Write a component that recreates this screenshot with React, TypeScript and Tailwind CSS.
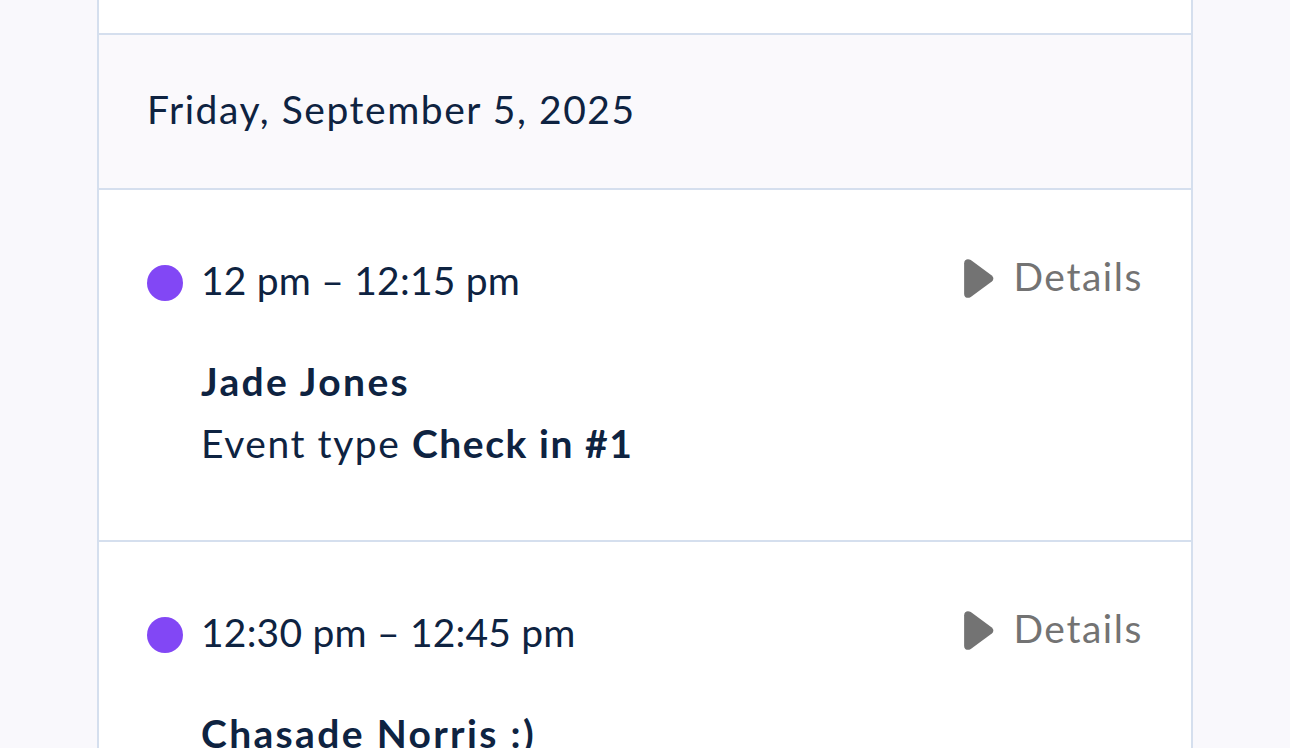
import React from "react";

interface EventItem {
  time: string;
  name: string;
  type: string;
}

const events: EventItem[] = [
  { time: "12 pm – 12:15 pm", name: "Jade Jones", type: "Check in #1" },
  { time: "12:30 pm – 12:45 pm", name: "Chasade Norris :)", type: "Check in #1" },
];

const Caret = () => (
  <svg viewBox="0 0 30 40" className="w-[31px] h-[41px]" fill="#737373">
    <path d="M1 5C1 1.5 4.5 0 7.5 2L28 17C30 18.5 30 21.5 28 23L7.5 38C4.5 40 1 38.5 1 35Z" />
  </svg>
);

const EventRow: React.FC<{ item: EventItem }> = ({ item }) => (
  <div className="border-t-2 border-[#d5dfee] bg-white px-[48px] pt-[62px] pb-[66px]">
    <div className="flex items-center justify-between h-[56px]">
      <div className="flex items-center">
        <span className="w-[36px] h-[36px] rounded-full bg-[#8247f5] mr-[18px] mt-[6px]" />
        <span className="tracking-[0.005em]">{item.time}</span>
      </div>
      <button className="flex items-center text-[#737373] -mt-[4px]">
        <Caret />
        <span className="ml-[19px] -mt-[4px]">Details</span>
      </button>
    </div>
    <div className="pl-[54px] mt-[42px] leading-[62px]">
      <div className="font-bold tracking-[0.06em]">{item.name}</div>
      <div>
        Event type <span className="font-bold tracking-[0.04em]">{item.type}</span>
      </div>
    </div>
  </div>
);

export default function App() {
  return (
    <div
      className="min-h-screen bg-[#f9f8fc] text-[#0e2341] text-[39px] leading-[56px] tracking-[0.04em]"
      style={{ fontFamily: "Lato, 'Noto Sans', sans-serif" }}
    >
      <div className="ml-[97px] w-[1096px] h-[748px] overflow-hidden border-x-2 border-[#d5dfee]">
        <div className="h-[33px] bg-white" />
        <div className="h-[155px] border-t-2 border-[#d5dfee] bg-[#faf9fc] px-[48px] flex items-center">
          <span className="mt-[-6px]">Friday, September 5, 2025</span>
        </div>
        {events.map((e, i) => (
          <EventRow key={i} item={e} />
        ))}
      </div>
    </div>
  );
}
